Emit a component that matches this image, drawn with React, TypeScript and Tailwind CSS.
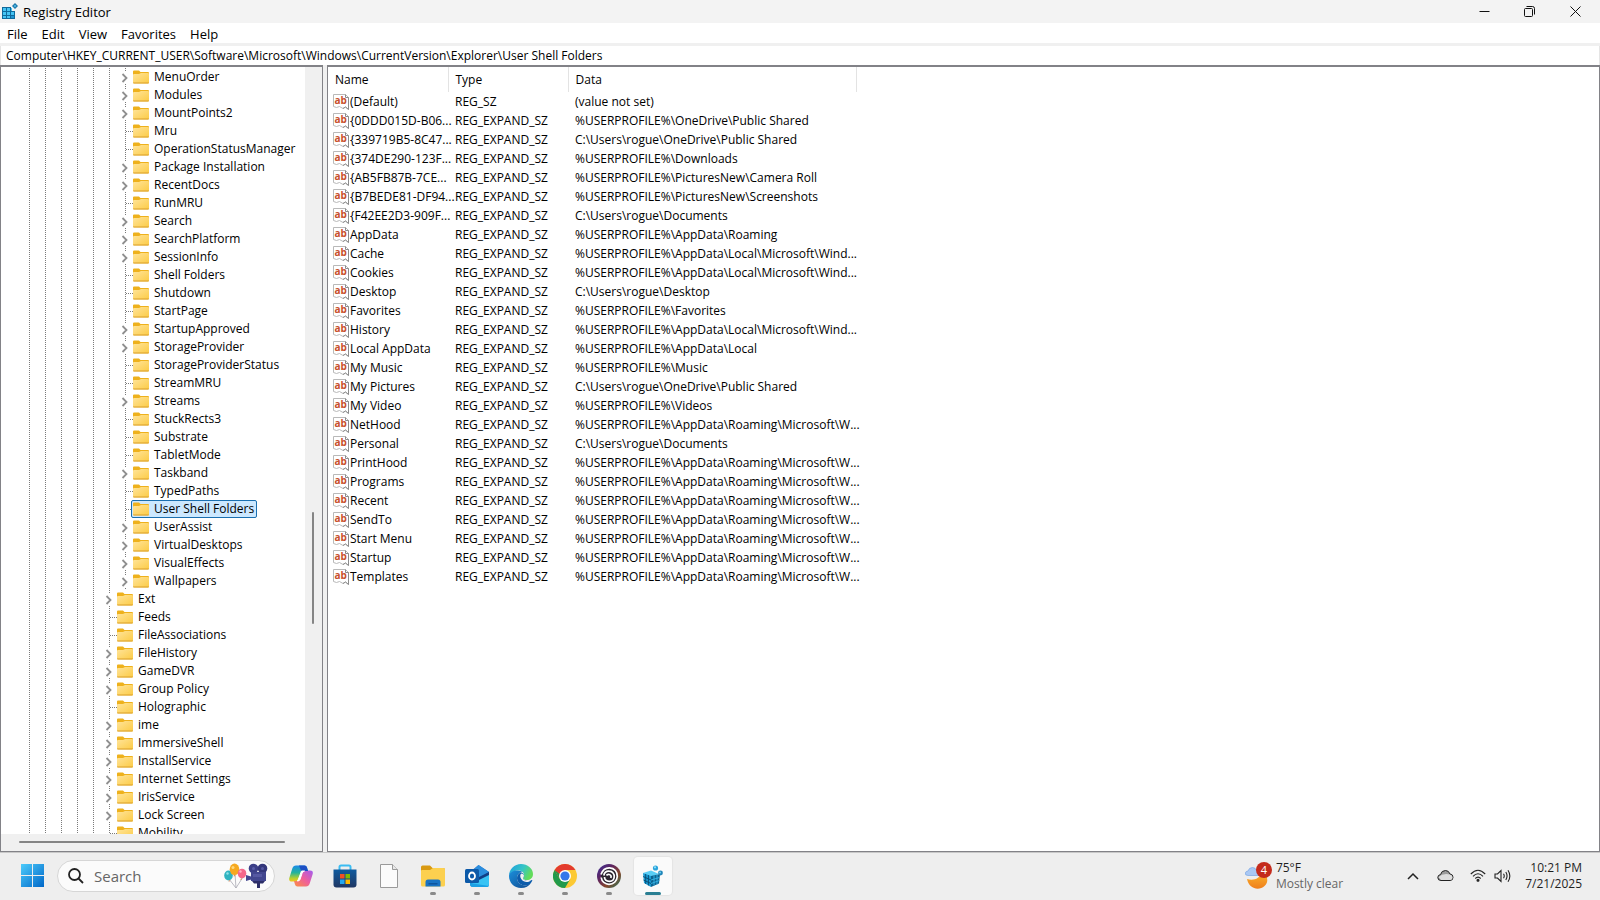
import { useState } from "react";
import type { ReactNode } from "react";

type TreeKey = {
  name: string;
  depth: number;
  open: boolean;
};

const key = (name: string, depth: number, open = false): TreeKey => ({ name, depth, open });

const TREE: TreeKey[] = [
  key("MenuOrder", 6, true),
  key("Modules", 6, true),
  key("MountPoints2", 6, true),
  key("Mru", 6),
  key("OperationStatusManager", 6),
  key("Package Installation", 6, true),
  key("RecentDocs", 6, true),
  key("RunMRU", 6),
  key("Search", 6, true),
  key("SearchPlatform", 6, true),
  key("SessionInfo", 6, true),
  key("Shell Folders", 6),
  key("Shutdown", 6),
  key("StartPage", 6),
  key("StartupApproved", 6, true),
  key("StorageProvider", 6, true),
  key("StorageProviderStatus", 6),
  key("StreamMRU", 6),
  key("Streams", 6, true),
  key("StuckRects3", 6),
  key("Substrate", 6),
  key("TabletMode", 6),
  key("Taskband", 6, true),
  key("TypedPaths", 6),
  key("User Shell Folders", 6),
  key("UserAssist", 6, true),
  key("VirtualDesktops", 6, true),
  key("VisualEffects", 6, true),
  key("Wallpapers", 6, true),
  key("Ext", 5, true),
  key("Feeds", 5),
  key("FileAssociations", 5),
  key("FileHistory", 5, true),
  key("GameDVR", 5, true),
  key("Group Policy", 5, true),
  key("Holographic", 5),
  key("ime", 5, true),
  key("ImmersiveShell", 5, true),
  key("InstallService", 5, true),
  key("Internet Settings", 5, true),
  key("IrisService", 5, true),
  key("Lock Screen", 5, true),
  key("Mobility", 5),
];

const SZ = "REG_EXPAND_SZ";

const VALUES = [
  ["(Default)", "REG_SZ", "(value not set)"],
  ["{0DDD015D-B06...", SZ, "%USERPROFILE%\\OneDrive\\Public Shared"],
  ["{339719B5-8C47...", SZ, "C:\\Users\\rogue\\OneDrive\\Public Shared"],
  ["{374DE290-123F...", SZ, "%USERPROFILE%\\Downloads"],
  ["{AB5FB87B-7CE...", SZ, "%USERPROFILE%\\PicturesNew\\Camera Roll"],
  ["{B7BEDE81-DF94...", SZ, "%USERPROFILE%\\PicturesNew\\Screenshots"],
  ["{F42EE2D3-909F...", SZ, "C:\\Users\\rogue\\Documents"],
  ["AppData", SZ, "%USERPROFILE%\\AppData\\Roaming"],
  ["Cache", SZ, "%USERPROFILE%\\AppData\\Local\\Microsoft\\Wind..."],
  ["Cookies", SZ, "%USERPROFILE%\\AppData\\Local\\Microsoft\\Wind..."],
  ["Desktop", SZ, "C:\\Users\\rogue\\Desktop"],
  ["Favorites", SZ, "%USERPROFILE%\\Favorites"],
  ["History", SZ, "%USERPROFILE%\\AppData\\Local\\Microsoft\\Wind..."],
  ["Local AppData", SZ, "%USERPROFILE%\\AppData\\Local"],
  ["My Music", SZ, "%USERPROFILE%\\Music"],
  ["My Pictures", SZ, "C:\\Users\\rogue\\OneDrive\\Public Shared"],
  ["My Video", SZ, "%USERPROFILE%\\Videos"],
  ["NetHood", SZ, "%USERPROFILE%\\AppData\\Roaming\\Microsoft\\W..."],
  ["Personal", SZ, "C:\\Users\\rogue\\Documents"],
  ["PrintHood", SZ, "%USERPROFILE%\\AppData\\Roaming\\Microsoft\\W..."],
  ["Programs", SZ, "%USERPROFILE%\\AppData\\Roaming\\Microsoft\\W..."],
  ["Recent", SZ, "%USERPROFILE%\\AppData\\Roaming\\Microsoft\\W..."],
  ["SendTo", SZ, "%USERPROFILE%\\AppData\\Roaming\\Microsoft\\W..."],
  ["Start Menu", SZ, "%USERPROFILE%\\AppData\\Roaming\\Microsoft\\W..."],
  ["Startup", SZ, "%USERPROFILE%\\AppData\\Roaming\\Microsoft\\W..."],
  ["Templates", SZ, "%USERPROFILE%\\AppData\\Roaming\\Microsoft\\W..."],
];

const V_DOTS = "bg-[repeating-linear-gradient(to_bottom,#7a7a7a_0px,#7a7a7a_1px,transparent_1px,transparent_2px)]";
const H_DOTS = "bg-[repeating-linear-gradient(to_right,#7a7a7a_0px,#7a7a7a_1px,transparent_1px,transparent_2px)]";

function RegeditIcon() {
  return (
    <svg width="17" height="17" viewBox="0 0 17 17" aria-hidden="true">
      <path d="M1 4h13v12H1z" fill="#0f6a9c" />
      <path d="M2 5h3v3H2zM6 5h3v3H6zM2 9h3v3H2zM6 9h3v3H6zM10 9h3v3h-3zM2 13h3v2H2zM6 13h3v2H6z" fill="#43c3f3" />
      <path d="M10 13h3v2h-3z" fill="#1e94d2" />
      <path d="M10 3h4v5h-4z" fill="#f3f3f3" />
      <path d="M10 5h1v3h-1z" fill="#43c3f3" />
      <path d="M14 0l3 3-3 3-3-3z" fill="#1b74a5" />
      <path d="M14 1.500l1.500 1.500L14 4.500 12.500 3z" fill="#4cb7e4" />
    </svg>
  );
}

function FolderIcon() {
  return (
    <svg width="16" height="14" viewBox="0 0 16 14" className="shrink-0" aria-hidden="true">
      <defs>
        <linearGradient id="folder" x1="0" y1="0" x2="1" y2="1">
          <stop offset="0" stopColor="#ffe49a" />
          <stop offset="1" stopColor="#fccb45" />
        </linearGradient>
      </defs>
      <path d="M0 1.500Q0 .5 1 .5H6L7.500 2H15Q16 2 16 3V6H0z" fill="#eeb11c" />
      <path d="M0 5Q0 4 1 4H6L8 3H15Q16 3 16 4V12.500Q16 13.500 15 13.500H1Q0 13.500 0 12.500z" fill="url(#folder)" />
      <path d="M0 12.500Q0 13.500 1 13.500H15Q16 13.500 16 12.500z" fill="#d9a02c" />
    </svg>
  );
}

function StringValueIcon() {
  return (
    <svg width="16" height="16" viewBox="0 0 16 16" className="shrink-0" aria-hidden="true">
      <path d="M.5 .5H12.500L15.500 3.500V15.500L12.500 13 10 14.500 6.500 12.500 3.500 13.500.5 12.500z" fill="#fff" stroke="#b9b9b9" />
      <path d="M12.500 .5V3.500H15.500V15.500L12.500 13 10 14.500" fill="none" stroke="#8c8c8c" />
      <text x="1.500" y="10" fontSize="10" fontWeight="700" fontFamily="Open Sans, sans-serif" fill="#c8502c">ab</text>
    </svg>
  );
}

function Chevron() {
  return (
    <svg width="8" height="10" viewBox="0 0 8 10" fill="none" stroke="#8f8f8f" strokeWidth="1.800" aria-hidden="true">
      <path d="M1.500 1l4 4-4 4" />
    </svg>
  );
}

function TreeRow({ item, selected, onSelect }: { item: TreeKey; selected: boolean; onSelect: () => void }) {
  return (
    <li className="flex h-[18px] items-center">
      {Array.from({ length: item.depth }, (_, i) => (
        <span key={i} className="flex w-4 shrink-0 self-stretch pl-2">
          <span className={`w-px ${V_DOTS}`} />
        </span>
      ))}
      {item.open ? (
        <span className="flex w-4 shrink-0 flex-col self-stretch pl-1">
          <span className={`ml-1 h-[3px] w-px ${V_DOTS}`} />
          <span className="flex h-[13px] items-center"><Chevron /></span>
          <span className={`ml-1 h-0.5 w-px ${V_DOTS}`} />
        </span>
      ) : (
        <span className="flex w-4 shrink-0 items-center self-stretch pl-2">
          <span className={`h-full w-px ${V_DOTS}`} />
          <span className={`h-px flex-1 ${H_DOTS}`} />
        </span>
      )}
      <button
        type="button"
        onClick={onSelect}
        className={`-ml-0.5 flex h-[18px] items-center gap-1 whitespace-nowrap border pl-px pr-0.5 text-xs leading-4 ${
          selected ? "rounded-xs border-[#1a6fb0] bg-[#cce8ff]" : "border-transparent"
        }`}
      >
        <FolderIcon />
        <span className="pl-px">{item.name}</span>
      </button>
    </li>
  );
}

function TaskButton({ label, state, children }: { label: string; state?: "running" | "active"; children: ReactNode }) {
  return (
    <button
      type="button"
      aria-label={label}
      className="flex h-12 w-11 shrink-0 items-center justify-center"
    >
      <span
        className={`relative flex h-[38px] w-[38px] items-center justify-center rounded-sm ${
          state === "active" ? "bg-[#fafafa] shadow-[0_0_1px_1px_#e4e4e4]" : ""
        }`}
      >
        {children}
        {state === "running" && <span className="absolute bottom-0 left-4 h-[3px] w-1.5 rounded-full bg-[#8a8a8a]" />}
        {state === "active" && <span className="absolute bottom-0 left-[11px] h-[3px] w-4 rounded-full bg-[#2b7f93]" />}
      </span>
    </button>
  );
}

function SearchArt() {
  return (
    <svg width="44" height="26" viewBox="0 0 44 26" aria-hidden="true">
      <path d="M5 16L12 25M11 11l1 14M19 14l-7 11" stroke="#a9a9b4" strokeWidth=".8" fill="none" />
      <ellipse cx="4.500" cy="12.500" rx="4.300" ry="5" fill="#2fb3c0" />
      <ellipse cx="10.500" cy="6.300" rx="4.800" ry="5.800" fill="#f6a91f" />
      <ellipse cx="18" cy="10.500" rx="4.300" ry="4.800" fill="#f4688a" />
      <path d="M10.500 11.500l-1.200 1.800h2.400zM5 17l-.5 1.800 2-.7zM17.500 15l-1.500 1.500 2 .3z" fill="#d98a5c" />
      <circle cx="9" cy="4.500" r="1.500" fill="#ffd77a" />
      <circle cx="3.500" cy="10.500" r="1.200" fill="#8fe2e6" />
      <circle cx="16.500" cy="8.500" r="1.200" fill="#ffb0c1" />
      <circle cx="29.500" cy="5.500" r="4.800" fill="#3c3f87" />
      <circle cx="38.500" cy="5.500" r="4.800" fill="#33367a" />
      <path d="M27 9h15v9H27zM22 12l5 1.500v3L22 18z" fill="#42468f" />
      <path d="M33 18h3v7h-3zM28 18h13l-2 2.500h-9z" fill="#2c2e68" />
      <circle cx="29.500" cy="5.500" r="1.500" fill="#5a5ea8" />
      <circle cx="38.500" cy="5.500" r="1.500" fill="#5356a0" />
      <path d="M29 11h9v3h-9z" fill="#5558a2" />
    </svg>
  );
}

function CopilotIcon() {
  return (
    <svg width="24" height="24" viewBox="0 0 24 24" aria-hidden="true">
      <defs>
        <linearGradient id="copA" x1="0" y1="0" x2="0" y2="1">
          <stop offset="0" stopColor="#1a8bea" />
          <stop offset=".45" stopColor="#24b39b" />
          <stop offset=".8" stopColor="#b6cf2f" />
          <stop offset="1" stopColor="#f4c41c" />
        </linearGradient>
        <linearGradient id="copB" x1="1" y1="0" x2="0" y2="1">
          <stop offset="0" stopColor="#a25cf0" />
          <stop offset=".5" stopColor="#ef5f9b" />
          <stop offset="1" stopColor="#fb9040" />
        </linearGradient>
      </defs>
      <path d="M7 1.500H15.500Q17.500 1.500 18 3.500L19 7H15.500Q13.500 7 13 9L11 15.500Q10.300 17.500 8 17.500H3Q-.5 17.500.3 14L3.300 4.500Q4.200 1.500 7 1.500z" fill="url(#copA)" />
      <path d="M17 22.500H8.500Q6.500 22.500 6 20.500L5 17H8.500Q10.500 17 11 15L13 8.500Q13.700 6.500 16 6.500H21Q24.500 6.500 23.700 10L20.700 19.500Q19.800 22.500 17 22.500z" fill="url(#copB)" />
      <path d="M10 1.500H15.500Q17.500 1.500 18 3.500L19 7H15.500Q13.500 7 12.900 8.800z" fill="#1c4fc4" />
      <path d="M12.500 7H15.500Q13.500 7.500 13 9.500L11 15.500Q10.500 17 8.500 17H8.200Q9 16.500 9.500 15z" fill="#fff" stroke="#fff" strokeWidth="1" />
    </svg>
  );
}

function StoreIcon() {
  return (
    <svg width="24" height="24" viewBox="0 0 24 24" aria-hidden="true">
      <defs>
        <linearGradient id="store" x1="0" y1="0" x2="0" y2="1">
          <stop offset="0" stopColor="#0f5a9e" />
          <stop offset="1" stopColor="#1f3763" />
        </linearGradient>
      </defs>
      <path d="M6.500 7V3Q6.500 1.500 8 1.500h8Q17.500 1.500 17.500 3V7" fill="none" stroke="#3bbcf2" strokeWidth="2" />
      <path d="M.5 5.500h23v15Q23.500 23.500 20.500 23.500h-17Q.5 23.500 .5 20.500z" fill="url(#store)" />
      <path d="M7 10h4.500v4.500H7z" fill="#f25022" />
      <path d="M12.500 10H17v4.500h-4.500z" fill="#7fba00" />
      <path d="M7 15.500h4.500V20H7z" fill="#23a8f0" />
      <path d="M12.500 15.500H17V20h-4.500z" fill="#ffb900" />
    </svg>
  );
}

function BlankFileIcon() {
  return (
    <svg width="18" height="24" viewBox="0 0 18 24" aria-hidden="true">
      <path d="M.5 .5H12.500L17.500 5.500V23.500H.5z" fill="#fbfbfb" stroke="#9a9a9a" />
      <path d="M12.500 .5V5.500H17.500" fill="#e8e8e8" stroke="#9a9a9a" />
    </svg>
  );
}

function ExplorerIcon() {
  return (
    <svg width="24" height="22" viewBox="0 0 24 22" aria-hidden="true">
      <path d="M0 2Q0 .5 1.500 .5H9L11.500 3H22.500Q24 3 24 4.500V9H0z" fill="#d99a12" />
      <path d="M0 6Q0 5 1 5H9L12 3H22.500Q24 3 24 4.500V20Q24 21.500 22.500 21.500H1.500Q0 21.500 0 20z" fill="#fcd04f" />
      <path d="M4.500 21.500V17Q4.500 14.500 7 14.500H17Q19.500 14.500 19.500 17V21.500z" fill="#1873c4" />
      <path d="M7.500 18H16.500V19.500H7.500z" fill="#0d559e" />
    </svg>
  );
}

function OutlookIcon() {
  return (
    <svg width="24" height="24" viewBox="0 0 24 24" aria-hidden="true">
      <path d="M5 8L13.500 1 24 8V20Q24 23 21 23H8Q5 23 5 20z" fill="#1b6fc9" />
      <path d="M13.500 1L24 8 12 16 5 9z" fill="#2c8ede" />
      <path d="M24 8V14L14 19 10 15z" fill="#123f86" />
      <path d="M24 11V20Q24 23 21 23H9Q6 23 5 20.500z" fill="#38c3f4" />
      <path d="M5 19L24 22Q23 23 21 23H8Q5.500 23 5 20z" fill="#1aa0e4" />
      <rect x="0" y="5" width="14" height="14" rx="1.500" fill="#0c59a8" />
      <ellipse cx="7" cy="12" rx="3" ry="3.500" fill="none" stroke="#fff" strokeWidth="1.800" />
    </svg>
  );
}

function EdgeIcon() {
  return (
    <svg width="24" height="24" viewBox="0 0 24 24" aria-hidden="true">
      <defs>
        <linearGradient id="edgeTop" x1="0" y1="0" x2="1" y2=".4">
          <stop offset="0" stopColor="#1c9de0" />
          <stop offset=".6" stopColor="#36c5c5" />
          <stop offset="1" stopColor="#63dc5a" />
        </linearGradient>
        <linearGradient id="edgeLow" x1="0" y1="0" x2="1" y2="1">
          <stop offset="0" stopColor="#1b8fdb" />
          <stop offset="1" stopColor="#114a8f" />
        </linearGradient>
      </defs>
      <path d="M0 12C0 5 5.500 0 12 0s12 4.500 12 10c0 4-3 6-6 6-2.500 0-4-.8-4-1.800 0-.8 1-1.200 1-3 0-2.500-2-4.700-5.500-4.700C4.500 6.500 0 9 0 12z" fill="url(#edgeTop)" />
      <path d="M0 12C0 8.500 4 6.500 8.500 6.500c3 0 5 1.500 5 1.500-3 0-5.500 3-5.500 6 0 4.500 4 7.500 8.500 7.500 2 0 4-1 5.500-2.500C20 22 16.500 24 12 24 5 24 0 18.500 0 12z" fill="url(#edgeLow)" />
      <path d="M8 14c0-2.500 1.500-4.500 3.500-5.500 2 0 3.500 1.500 3.500 3 0 1.500-1 2-1 2.800 0 1.200 2 2.700 5 2.700 1.500 0 3-.5 3.800-1 .4-.2.700.1.500.5-.6 1.500-1.500 2.800-2.300 3.500-1.200 1-3 1.500-4.500 1.500C12 21.500 8 18.500 8 14z" fill="#0d5cab" />
      <path d="M12 9.500c1.800 0 3 1 3 2.300 0 1.200-1 1.600-1 2.500 0 1.300 2 2.700 5 2.700 1 0 2-.2 2.800-.5-2 1.700-5 2-7 .8-2.500-1.300-4.800-4.800-2.800-7.800z" fill="#f0f0f0" />
    </svg>
  );
}

function ChromeIcon() {
  return (
    <svg width="24" height="24" viewBox="0 0 24 24" aria-hidden="true">
      <circle cx="12" cy="12" r="12" fill="#fcc934" />
      <path d="M1.600 6A12 12 0 0 0 12 24L17.200 15 12 17 6.800 15z" fill="#229a4b" />
      <path d="M1.600 6A12 12 0 0 1 22.400 6H12L6.800 15z" fill="#e33b2e" />
      <path d="M1.600 6L6.800 15 9 12z" fill="#229a4b" />
      <circle cx="12" cy="12" r="6" fill="#fff" />
      <circle cx="12" cy="12" r="4.600" fill="#3477ea" />
    </svg>
  );
}

function UbisoftIcon() {
  return (
    <svg width="24" height="24" viewBox="0 0 24 24" aria-hidden="true">
      <defs>
        <linearGradient id="ubi" x1="0" y1="0" x2="1" y2="1">
          <stop offset="0" stopColor="#3a2f9c" />
          <stop offset=".35" stopColor="#5e2560" />
          <stop offset=".65" stopColor="#86462c" />
          <stop offset="1" stopColor="#1f7a62" />
        </linearGradient>
      </defs>
      <circle cx="12" cy="12" r="12" fill="url(#ubi)" />
      <circle cx="12" cy="12" r="8" fill="#2c2530" />
      <g fill="none" stroke="#fff" strokeWidth="1.700">
        <path d="M4 10.500C5.500 6 8.800 3.700 12.500 3.800 17.500 4 20.500 8 20.300 12.500 20 17 16.500 20.300 12 20.300 8 20.300 4.700 17.500 4.200 13.500" />
        <path d="M6.800 11.500C7.300 8.800 9.500 7 12.300 7.200 15.500 7.300 17.500 10 17.200 13 17 15.500 15 17.300 12.500 17.300 9.500 17.300 7.500 15.500 7.500 13" />
        <path d="M9.500 11.500C10 10.500 11.200 10.200 12.300 10.500 14 11 14.500 12.500 13.800 14" />
      </g>
    </svg>
  );
}

function RegeditCubeIcon() {
  return (
    <svg width="20" height="22" viewBox="0 0 20 22" aria-hidden="true">
      <path d="M0 8L8 5.500 16 9 8 12z" fill="#59cdf5" />
      <path d="M0 8L8 11V22L1 18z" fill="#189ad3" />
      <path d="M8 11L17 9 16 18.500 8 22z" fill="#0c628f" />
      <path d="M2.700 9v10M5.400 10v10.500M0 11.500l8 3.500M.5 15l7.500 3.500" stroke="#084b72" strokeWidth=".9" />
      <path d="M11 10.500v10M14 10v9.500M8 15l8.500-2.500M8 18.500l8.500-3" stroke="#37b6e9" strokeWidth=".9" />
      <circle cx="12.500" cy="3" r="2.600" fill="#2ba4db" />
      <circle cx="17.500" cy="8" r="2.400" fill="#2086b9" />
      <circle cx="12" cy="2.300" r="1.100" fill="#8be0fb" />
      <circle cx="17" cy="7.400" r="1" fill="#6fd0f4" />
    </svg>
  );
}

function WeatherIcon() {
  return (
    <svg width="27" height="28" viewBox="0 0 27 28" aria-hidden="true">
      <defs>
        <linearGradient id="moon" x1="0" y1="0" x2="0" y2="1">
          <stop offset="0" stopColor="#fbb52c" />
          <stop offset="1" stopColor="#ef7f1c" />
        </linearGradient>
      </defs>
      <path d="M2 17C8 19 15 17 17 10 23 13 24 20 19.500 24 14 29 4 27 2 17z" fill="url(#moon)" />
      <path d="M3 13.500Q0 13.500 .3 11 .8 9 3 9 4 5.500 7.500 5.500 10.500 5.500 11.500 8.500 14 9 13.500 13.500z" fill="#a9c8f4" stroke="#6f9ee0" strokeWidth=".6" />
      <circle cx="19" cy="8" r="8" fill="#c42b1c" />
      <text x="19" y="12" textAnchor="middle" fontSize="11" fontFamily="Open Sans, sans-serif" fill="#fff">4</text>
    </svg>
  );
}

function App() {
  const [selected, setSelected] = useState("User Shell Folders");
  const [address, setAddress] = useState(
    "Computer\\HKEY_CURRENT_USER\\Software\\Microsoft\\Windows\\CurrentVersion\\Explorer\\User Shell Folders"
  );

  return (
    <div className="flex h-screen flex-col overflow-hidden bg-[#f0f0f0] font-['Open_Sans','Noto_Sans',sans-serif] text-black">
      <header className="flex h-[23px] shrink-0 items-center bg-[#f3f3f3] pl-px">
        <RegeditIcon />
        <h1 className="flex-1 pl-[5px] text-[13px] leading-5">Registry Editor</h1>
        <div className="flex items-center pr-px">
          <button type="button" aria-label="Minimize" className="flex h-5 w-[45px] items-center justify-center">
            <svg width="11" height="11" viewBox="0 0 11 11" stroke="#111" aria-hidden="true"><path d="M.5 5.500H10.500" /></svg>
          </button>
          <button type="button" aria-label="Restore" className="flex h-5 w-[45px] items-center justify-center">
            <svg width="11" height="11" viewBox="0 0 11 11" fill="none" stroke="#111" aria-hidden="true">
              <rect x=".5" y="2.500" width="8" height="8" rx="1" />
              <path d="M2.500 .5H8.500Q10.500 .5 10.500 2.500V8.500" />
            </svg>
          </button>
          <button type="button" aria-label="Close" className="flex h-5 w-[47px] items-center justify-center">
            <svg width="11" height="11" viewBox="0 0 11 11" stroke="#111" aria-hidden="true"><path d="M.5 .5l10 10M10.500 .5l-10 10" /></svg>
          </button>
        </div>
      </header>

      <nav className="flex h-5 shrink-0 items-center gap-[14px] bg-white pl-[7px] pt-px text-[13px] leading-5">
        <button type="button">File</button>
        <button type="button">Edit</button>
        <button type="button">View</button>
        <button type="button">Favorites</button>
        <button type="button">Help</button>
      </nav>

      <div className="mt-[3px] flex h-[19px] shrink-0 border-x border-[#e5e5e5] bg-white">
        <input
          type="text"
          aria-label="Address"
          value={address}
          onChange={(e) => setAddress(e.target.value)}
          className="w-full bg-transparent pl-[5px] text-xs leading-[19px] outline-none"
        />
      </div>

      <main className="flex min-h-0 flex-1 gap-1">
        <section className="flex w-[323px] shrink-0 flex-col border border-t-2 border-[#828287] bg-[#f0f0f0]">
          <div className="flex min-h-0 flex-1">
            <ul className="min-w-0 flex-1 overflow-hidden bg-white pl-5 pt-px">
              {TREE.map((item) => (
                <TreeRow
                  key={item.name}
                  item={item}
                  selected={item.name === selected}
                  onSelect={() => setSelected(item.name)}
                />
              ))}
            </ul>
            <div className="flex w-[17px] flex-col items-center pr-0.5">
              <div className="flex-[445]" />
              <div className="w-0.5 flex-[112] rounded-full bg-[#858585]" />
              <div className="flex-[210]" />
            </div>
          </div>
          <div className="flex h-[17px] shrink-0 items-center pb-0.5 pl-[18px] pr-[37px]">
            <div className="h-0.5 flex-1 rounded-full bg-[#858585]" />
          </div>
        </section>

        <section className="min-w-0 flex-1 overflow-hidden border border-t-2 border-[#828287] bg-white">
          <table className="w-[528px] table-fixed border-collapse text-left text-xs">
            <colgroup>
              <col className="w-[120px]" />
              <col className="w-[120px]" />
              <col className="w-[288px]" />
            </colgroup>
            <thead>
              <tr className="h-[25px]">
                <th className="border-r border-[#e3e3e3] p-0 pl-[7px] font-normal">Name</th>
                <th className="border-r border-[#e3e3e3] p-0 pl-[7px] font-normal">Type</th>
                <th className="border-r border-[#e3e3e3] p-0 pl-[7px] font-normal">Data</th>
              </tr>
            </thead>
            <tbody>
              {VALUES.map(([name, type, data]) => (
                <tr key={name} className="h-[19px] whitespace-nowrap leading-[19px]">
                  <td className="p-0 pl-[5px]">
                    <span className="flex items-center gap-px">
                      <StringValueIcon />
                      {name}
                    </span>
                  </td>
                  <td className="p-0 pl-[7px]">{type}</td>
                  <td className="p-0 pl-[7px]">{data}</td>
                </tr>
              ))}
            </tbody>
          </table>
        </section>
      </main>

      <footer className="flex h-12 shrink-0 items-center border-t border-[#c8c8c8] bg-[#eeeeee] pb-0.5 pl-2.5">
        <button type="button" aria-label="Start" className="flex h-12 w-11 shrink-0 items-center justify-center">
          <svg width="23" height="23" viewBox="0 0 23 23" aria-hidden="true">
            <defs>
              <linearGradient id="win" x1="0" y1="0" x2="1" y2="1">
                <stop offset="0" stopColor="#4ccbfb" />
                <stop offset="1" stopColor="#0067c8" />
              </linearGradient>
            </defs>
            <path d="M0 0H11V11H0zM12 0H23V11H12zM0 12H11V23H0zM12 12H23V23H12z" fill="url(#win)" />
          </svg>
        </button>
        <label className="ml-[3px] mr-1 flex h-8 w-[218px] shrink-0 items-center rounded-full border border-[#d6d6d6] bg-[#fbfbfb] pl-2.5 pr-1.5">
          <svg width="16" height="16" viewBox="0 0 16 16" fill="none" stroke="#222" strokeWidth="1.800" aria-hidden="true">
            <circle cx="6.500" cy="6.500" r="5.500" />
            <path d="M10.500 10.500L15 15" />
          </svg>
          <input
            type="text"
            aria-label="Search"
            placeholder="Search"
            className="min-w-0 flex-1 bg-transparent pl-2.5 text-[15px] leading-5 outline-none placeholder:text-[#666666]"
          />
          <SearchArt />
        </label>
        <TaskButton label="Copilot"><CopilotIcon /></TaskButton>
        <TaskButton label="Microsoft Store"><StoreIcon /></TaskButton>
        <TaskButton label="Document"><BlankFileIcon /></TaskButton>
        <TaskButton label="File Explorer" state="running"><ExplorerIcon /></TaskButton>
        <TaskButton label="Outlook" state="running"><OutlookIcon /></TaskButton>
        <TaskButton label="Edge" state="running"><EdgeIcon /></TaskButton>
        <TaskButton label="Chrome" state="running"><ChromeIcon /></TaskButton>
        <TaskButton label="Ubisoft Connect" state="running"><UbisoftIcon /></TaskButton>
        <TaskButton label="Registry Editor" state="active"><RegeditCubeIcon /></TaskButton>

        <div className="ml-auto flex items-center pr-[18px] text-xs leading-4">
          <button type="button" className="mr-16 flex items-center gap-1 text-left">
            <WeatherIcon />
            <span>
              <span className="block text-[#1f1f1f]">75°F</span>
              <span className="block text-[#666666]">Mostly clear</span>
            </span>
          </button>
          <button type="button" aria-label="Show hidden icons" className="mr-[18px]">
            <svg width="12" height="8" viewBox="0 0 12 8" fill="none" stroke="#222" strokeWidth="1.500" aria-hidden="true"><path d="M1 7l5-5 5 5" /></svg>
          </button>
          <button type="button" aria-label="OneDrive" className="mr-4">
            <svg width="17" height="13" viewBox="0 0 17 13" aria-hidden="true">
              <path d="M4 11.500Q.8 11.500 .8 8.500 .8 6 3.500 5.500 4.500 1.500 8.500 1.500 11.800 1.500 13 5 16 5.300 16 8.300 16 11.500 13 11.500z" fill="#9c9c9c" stroke="#222" />
              <path d="M4 11Q2.500 9 1.500 8 6 4 12.800 5.500 15.500 6 15.500 8.300 15.500 11 13 11z" fill="#dedede" />
            </svg>
          </button>
          <button type="button" aria-label="Network and volume" className="mr-[14px] flex items-center gap-2">
            <svg width="16" height="13" viewBox="0 0 16 13" fill="none" stroke="#222" strokeWidth="1.100" aria-hidden="true">
              <path d="M.8 5Q8-2.500 15.200 5M3 7.300Q8 2.200 13 7.300M5.300 9.500Q8 6.800 10.700 9.500" />
              <circle cx="8" cy="11.300" r="1" fill="#222" />
            </svg>
            <svg width="17" height="14" viewBox="0 0 17 14" fill="none" stroke="#222" strokeWidth="1.100" aria-hidden="true">
              <path d="M1 5H3.500L7 1.500V12.500L3.500 9H1zM9.500 4.800Q11 7 9.500 9.200M11.800 3Q14.300 7 11.800 11M14 1.200Q17.700 7 14 12.800" />
            </svg>
          </button>
          <div className="text-right text-[#1f1f1f]">
            <div>10:21 PM</div>
            <div>7/21/2025</div>
          </div>
        </div>
      </footer>
    </div>
  );
}

export default App;
